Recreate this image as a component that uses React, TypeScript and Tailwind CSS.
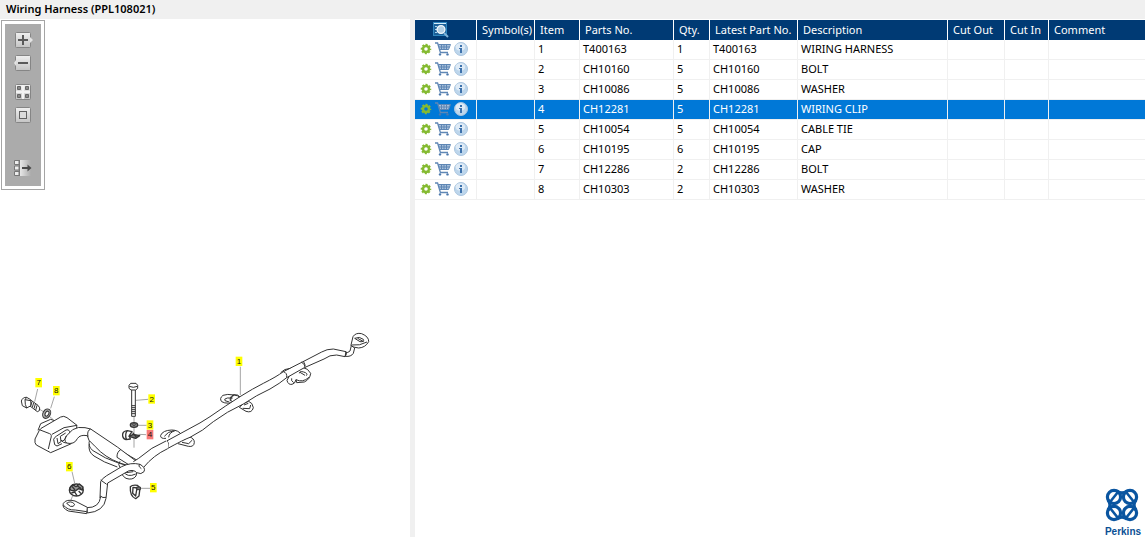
import React from 'react';

type Part = {
  item: number;
  partNo: string;
  qty: number;
  description: string;
};

const parts: Part[] = [
  { item: 1, partNo: 'T400163', qty: 1, description: 'WIRING HARNESS' },
  { item: 2, partNo: 'CH10160', qty: 5, description: 'BOLT' },
  { item: 3, partNo: 'CH10086', qty: 5, description: 'WASHER' },
  { item: 4, partNo: 'CH12281', qty: 5, description: 'WIRING CLIP' },
  { item: 5, partNo: 'CH10054', qty: 5, description: 'CABLE TIE' },
  { item: 6, partNo: 'CH10195', qty: 6, description: 'CAP' },
  { item: 7, partNo: 'CH12286', qty: 2, description: 'BOLT' },
  { item: 8, partNo: 'CH10303', qty: 2, description: 'WASHER' },
];

// Label centres, in drawing units
const callouts = [
  { n: 1, x: 717, y: -11 },
  { n: 2, x: 455, y: 102 },
  { n: 3, x: 450, y: 180 },
  { n: 4, x: 450, y: 209 },
  { n: 5, x: 460, y: 368 },
  { n: 6, x: 208, y: 305 },
  { n: 7, x: 116, y: 53 },
  { n: 8, x: 169, y: 77 },
];

function GearIcon() {
  return (
    <svg width="12" height="12" viewBox="0 0 12 12">
      <circle cx="6" cy="6" r="4.3" fill="none" stroke="#86ba35" strokeWidth="2" strokeDasharray="2 1.377" strokeDashoffset="1" />
      <circle cx="6" cy="6" r="3" fill="none" stroke="#84ba30" strokeWidth="2.4" />
    </svg>
  );
}

function CartIcon() {
  return (
    <svg width="16" height="14" viewBox="0 0 16 14" fill="none">
      <path d="M3.5 2.5H15L13.5 7.5H5Z" fill="#a9c1dc" />
      <path d="M0 1H2.6L5.4 10.5H13" stroke="#5f87b5" strokeWidth="1.3" />
      <path d="M3.3 2.5H15.5L13.5 7.5H4.8M3.8 5H14.5M6.5 2.5V7.5M9 2.5V7.5M11.5 2.5V7.5" stroke="#5f87b5" />
      <circle cx="5" cy="12.4" r="1.2" fill="#4d79ad" />
      <circle cx="12.5" cy="12.4" r="1.2" fill="#4d79ad" />
    </svg>
  );
}

function InfoIcon() {
  return (
    <svg width="14" height="14" viewBox="0 0 14 14">
      <circle cx="7" cy="7" r="6.5" fill="#bdd6ec" stroke="#a9c4de" />
      <ellipse cx="6.4" cy="5" rx="4.8" ry="3.8" fill="#dfebf6" />
      <rect x="6" y="3" width="2" height="2" fill="#3f73ad" />
      <path d="M5 6H8V11H6V7H5Z" fill="#3f73ad" />
    </svg>
  );
}

function SearchListIcon() {
  return (
    <svg width="16" height="16" viewBox="0 0 16 16">
      <rect x="0.5" y="0.5" width="13" height="13" fill="#1a5f98" stroke="#2f86bf" />
      <path d="M1 1.5H13" stroke="#d5ecfa" strokeWidth="1" />
      <path d="M2 4.5H4M2 7.5H4M2 10.5H4" stroke="#a9d5f0" />
      <circle cx="8" cy="7.5" r="3.9" fill="#b4d0e4" stroke="#f0f6fa" strokeWidth="1.4" />
      <path d="M11 11L15 15" stroke="#7fb4da" strokeWidth="2" />
    </svg>
  );
}

function ToolFrame({ notch, children }: { notch?: 'left' | 'right'; children: React.ReactNode }) {
  return (
    <svg width="19" height="16" viewBox="0 0 19 16">
      <defs>
        <linearGradient id="tool" x1="0" y1="0" x2="0" y2="1">
          <stop offset="0" stopColor="#f0f0f0" />
          <stop offset="1" stopColor="#c4c4c4" />
        </linearGradient>
      </defs>
      <rect x="1.5" y="0.5" width="15" height="15" rx="1" fill="url(#tool)" stroke="#858585" />
      {notch === 'right' && <path d="M16 5L19 8L16 11Z" fill="#e4e4e4" />}
      {notch === 'left' && <path d="M2 5L0 8L2 11Z" fill="#e4e4e4" />}
      {children}
    </svg>
  );
}

function Toolbar() {
  return (
    <div className="w-11 border border-[#a5a5a5] bg-white p-[3px] ml-px mt-px">
      <div className="flex h-[162px] flex-col items-center bg-[#ababab] pt-2">
        <button type="button" aria-label="Zoom in" className="h-4">
          <ToolFrame notch="right">
            <path d="M4 8H14M9 3V13" stroke="#5a5a5a" strokeWidth="2" />
          </ToolFrame>
        </button>
        <button type="button" aria-label="Zoom out" className="mt-[7px] h-4">
          <ToolFrame notch="left">
            <path d="M4 8H14" stroke="#5a5a5a" strokeWidth="2" />
          </ToolFrame>
        </button>
        <button type="button" aria-label="Fit to window" className="mt-[13px] h-4">
          <ToolFrame>
            <path d="M9 1V15M2 8H16" stroke="#f2f2f2" strokeWidth="2" />
            <path d="M3.5 2.5H6.5V5.5H3.5ZM11.5 2.5H14.5V5.5H11.5ZM3.5 10.5H6.5V13.5H3.5ZM11.5 10.5H14.5V13.5H11.5Z" fill="#888" stroke="#666" />
          </ToolFrame>
        </button>
        <button type="button" aria-label="Actual size" className="mt-[7px] h-4">
          <ToolFrame>
            <rect x="5.5" y="4.5" width="7" height="7" fill="#dcdcdc" stroke="#626262" />
          </ToolFrame>
        </button>
        <button type="button" aria-label="Hide list" className="mt-[37px] h-4">
          <svg width="19" height="16" viewBox="0 0 19 16">
            <defs>
              <linearGradient id="fade">
                <stop offset="0" stopColor="#e8e8e8" />
                <stop offset="1" stopColor="#ababab" />
              </linearGradient>
            </defs>
            <rect x="6" y="0" width="11" height="16" fill="url(#fade)" />
            <path d="M0.5 0.5H5V4.5H0.5ZM0.5 6H5V10H0.5ZM0.5 11.5H5V15.5H0.5Z" fill="#ededed" stroke="#777" />
            <path d="M5.5 0V16" stroke="#777" />
            <path d="M8 8H15" stroke="#4a4a4a" strokeWidth="2" />
            <path d="M13.5 4.5L17.5 8L13.5 11.5Z" fill="#4a4a4a" />
          </svg>
        </button>
      </div>
    </div>
  );
}

function HarnessDrawing() {
  return (
    <svg width="410" height="205" viewBox="0 -135 1230 615" fill="none" stroke="#333" strokeWidth="3" strokeLinejoin="round" role="img" aria-label="Wiring harness">
      {/* leader lines */}
      <path
        d="M721 5V90M408 106L444 103M412 181H440M416 208L438 209M420 370H450M216 320L224 354M113 72L104 110M163 95L152 130M118 132L130 140M148 154L160 164M402 155V248M218 392L212 408"
        stroke="#777"
        strokeWidth="2"
      />

      {/* bolt 7 and washer 8 */}
      <path d="M92 105L114 121Q122 128 118 137L112 140L90 123" fill="#fff" />
      <path d="M64 108Q68 96 80 97L92 104L93 122L80 129L67 122ZM80 97L75 104L76 118L80 129M75 104L92 107" fill="#fff" />
      <path d="M96 110L92 122M101 113L97 127M106 117L102 131M111 121L107 136" />
      <ellipse cx="140" cy="146" rx="11" ry="15" transform="rotate(30 140 146)" fill="#aaa" />
      <ellipse cx="141" cy="146" rx="5" ry="8" transform="rotate(30 141 146)" fill="#fff" />

      {/* connector */}
      <path d="M114 196L122 176L152 163L164 167" />
      <path d="M105 222L118 196Q121 190 132 185L182 156Q191 151 201 158L231 181L226 205L214 236L152 263L109 240Q103 235 105 222Z" fill="#fff" />
      <path d="M118 194L149 206Q157 208 152 222L145 252M156 208L192 188L231 181" />
      <path d="M161 223Q163 217 170 213L198 195Q206 191 209 200L210 209M161 223L164 239L171 243L186 236M171 219L174 236L183 230L181 214L197 204" />

      {/* cable from the connector */}
      <path d="M270 222Q261 244 279 257Q314 281 358 295L388 303L410 285L290 215Z" fill="#fff" />
      <path d="M183 226Q193 232 199 213L218 194Q234 184 255 188L272 192L352 246L412 291L388 303L360 294Q314 277 286 245L267 226L262 212Q240 208 232 221Q223 240 199 234Q190 234 183 226Z" fill="#fff" />
      <path d="M272 192Q260 197 264 215M199 213Q190 225 200 234M352 306Q310 292 282 273Q263 260 268 237M363 253Q350 261 351 277L410 314M360 289Q352 298 361 309" />

      {/* small eyelet under the junction */}
      <path d="M366 309Q359 329 378 340Q398 347 408 333L412 315M369 319Q382 339 407 327M378 323L400 320" fill="#fff" />

      {/* main loom */}
      <g transform="translate(570 -135)">
        <path d="M-72 355Q-90 357 -88 346Q-82 331 -55 330Q-34 330 -25 345M-77 349Q-67 335 -49 332M-64 352Q-63 338 -45 332" />
        <path d="M-36 371L-5 379Q12 382 13 367Q13 354 -4 350L-18 359M-24 367L-4 371L7 360" />
        <path d="M144 243Q112 255 95 245Q87 235 99 226Q111 221 132 225Q145 226 151 233M118 246L105 242Q100 237 112 234L128 234M124 245Q119 232 132 226" fill="#fff" />
        <path d="M148 262L168 274Q186 280 190 263Q188 248 176 244L160 251ZM158 265L179 266L182 255M162 255L175 250" fill="#fff" />
        <path d="M297 170L291 181Q294 195 306 193Q315 192 318 179L320 188L343 186Q360 178 362 160Q355 145 337 142L305 154Z" fill="#fff" />
        <path d="M305 175Q302 182 311 188M328 160Q328 152 341 156Q355 160 349 167M330 157L345 166M318 179Q338 189 357 172" />
        <path d="M483 75L489 50Q497 37 515 41Q537 50 536 65Q526 83 506 84L490 81Q480 78 483 75Z" fill="#fff" />
        <path d="M494 55Q509 48 520 58Q524 66 510 65ZM503 55L521 65M485 75Q509 78 531 66" />
        <path d="M484 77L480 93Q474 99 466 98L466 109Q483 111 490 100L494 84Z" fill="#fff" />
        <path
          d="M-68 386Q-19 359 0 352Q40 332 70 305Q110 275 160 252Q200 225 240 207Q270 190 290 173L343 143L402 117Q419 104 440 105L465 110L468 95L430 87Q410 87 395 96L345 122L280 155Q260 170 220 190Q190 205 150 230Q110 255 60 290Q30 310 0 325L-70 363"
          fill="#fff"
        />
        <path d="M468 95Q472 102 465 110M334 126Q347 134 345 143M340 123L346 137M280 155Q292 158 290 173M272 158Q282 146 301 145M-70 363Q-60 370 -68 386M121 243Q118 229 132 224Q145 223 150 231" />
      </g>
      <path d="M400 290L416 280Q454 246 498 228Q510 234 503 251Q460 271 431 307L408 308Z" fill="#fff" stroke="none" />
      <path d="M400 290L416 280Q454 246 498 228M503 251Q460 271 431 307" />

      {/* lower branch */}
      <path d="M300 398L302 350Q304 342 320 332L365 305Q392 291 420 298Q438 308 432 320Q424 330 410 323Q402 313 385 318L323 354L318 400Q312 440 262 444L260 428Q298 429 302 395Z" fill="#fff" />
      <path d="M302 345L320 358M301 393Q308 400 318 397M420 298Q412 302 424 311" />
      <path d="M262 427L225 408Q199 401 190 415Q185 429 205 438L260 446ZM200 415Q213 405 224 418Q222 427 211 424ZM190 420Q202 436 226 435L260 440" fill="#fff" />

      {/* bolt 2, washer 3, clip 4 */}
      <path d="M387 61L392 55H408L413 61V70L407 75H393L387 70ZM388 64Q400 70 412 64M395 75V154H406V75" fill="#fff" />
      <path d="M395 122H406M395 128H406M395 134H406M395 140H406M395 146H406" />
      <ellipse cx="402" cy="180" rx="11" ry="7" fill="#888" strokeWidth="4" />
      <ellipse cx="402" cy="179" rx="5" ry="2" fill="#fff" />
      <path d="M368 207Q370 198 382 197L396 200L388 212L391 222L378 224Q366 220 368 207ZM382 197Q374 206 379 223" fill="#fff" strokeWidth="4" />
      <path d="M387 214L400 208L419 212L407 220ZM398 203L410 218" fill="#777" strokeWidth="4" />

      {/* tie 5 and cap 6 */}
      <path d="M391 365Q397 359 412 361L420 369L417 393L407 401Q389 394 391 365ZM399 367L398 385L407 393L411 369Z" fill="#fff" strokeWidth="4" />
      <path d="M410 366H421V374H411Z" fill="#777" />
      <ellipse cx="229" cy="375" rx="21" ry="18" fill="#fff" strokeWidth="4" />
      <path d="M209 370L218 359L228 365L238 357L249 366L247 375L236 371L226 378L213 376Z" fill="#999" strokeWidth="4" />
      <path d="M216 364L225 375M232 363L244 371M214 384L224 381L231 392M236 378L243 386" strokeWidth="4" />

      {callouts.map((c) => (
        <g key={c.n} stroke="none">
          <rect x={c.x - 10} y={c.y - 14} width="20" height="28" fill={c.n === 4 ? '#f77878' : '#ffff00'} />
          <text x={c.x} y={c.y + 8} textAnchor="middle" fontSize="24" fill="#111" fontFamily="'Liberation Sans', sans-serif">
            {c.n}
          </text>
        </g>
      ))}
    </svg>
  );
}

function PerkinsLogo() {
  return (
    <svg width="40" height="50" viewBox="0 0 40 50" role="img" aria-label="Perkins">
      <g fill="none" stroke="#0a55a0" strokeWidth="3.2">
        <circle cx="11" cy="10" r="6.6" />
        <circle cx="27" cy="10" r="6.6" />
        <circle cx="11" cy="26" r="6.6" />
        <circle cx="27" cy="26" r="6.6" />
        <path d="M7 15L15 5M31 15L23 5M7 21L15 31M31 21L23 31" strokeWidth="2.6" />
        <path d="M14 4Q19 8 24 4M14 32Q19 28 24 32M5 13Q9 18 5 23M33 13Q29 18 33 23" />
      </g>
      <text x="20" y="48" textAnchor="middle" fontSize="10" fontWeight="bold" fill="#0a4f94" fontFamily="'Liberation Sans', sans-serif">
        Perkins
      </text>
    </svg>
  );
}

function PartsTable() {
  const th = 'h-5 border-r border-white p-0 pl-[5px] text-left font-normal last:border-r-0';
  const td = 'h-5 border-r border-b border-[#f0f0f0] p-0 pb-0.5 pl-[3px] last:border-r-0';

  return (
    <table className="w-full table-fixed border-separate border-spacing-0 whitespace-nowrap text-[11px] leading-4">
      <colgroup>
        <col className="w-[62px]" />
        <col className="w-[58px]" />
        <col className="w-[45px]" />
        <col className="w-[94px]" />
        <col className="w-9" />
        <col className="w-[88px]" />
        <col className="w-[150px]" />
        <col className="w-[57px]" />
        <col className="w-11" />
        <col />
      </colgroup>
      <thead>
        <tr className="bg-[#003a74] text-white">
          <th className="h-5 border-r border-white p-0 pl-[18px]" aria-label="Actions">
            <SearchListIcon />
          </th>
          <th className={th}>Symbol(s)</th>
          <th className={th}>Item</th>
          <th className={th}>Parts No.</th>
          <th className={th}>Qty.</th>
          <th className={th}>Latest Part No.</th>
          <th className={th}>Description</th>
          <th className={th}>Cut Out</th>
          <th className={th}>Cut In</th>
          <th className={th}>Comment</th>
        </tr>
      </thead>
      <tbody>
        {parts.map((p) => (
          <tr key={p.item} className={p.item === 4 ? 'bg-[#0078d7] text-white' : 'bg-white text-black'}>
            <td className="h-5 border-r border-b border-[#f0f0f0] p-0 pb-0.5">
              <div className="flex items-center gap-[3px] pl-[5px]">
                <button type="button" aria-label={`Options for item ${p.item}`}>
                  <GearIcon />
                </button>
                <button type="button" aria-label={`Add item ${p.item} to cart`}>
                  <CartIcon />
                </button>
                <button type="button" aria-label={`Details of item ${p.item}`}>
                  <InfoIcon />
                </button>
              </div>
            </td>
            <td className={td}></td>
            <td className={td}>{p.item}</td>
            <td className={td}>{p.partNo}</td>
            <td className={td}>{p.qty}</td>
            <td className={td}>{p.partNo}</td>
            <td className={td}>{p.description}</td>
            <td className={td}></td>
            <td className={td}></td>
            <td className={td}></td>
          </tr>
        ))}
      </tbody>
    </table>
  );
}

export default function App() {
  return (
    <div className="flex min-h-screen flex-col bg-white font-['Noto_Sans',sans-serif] text-black">
      <h1 className="bg-[#f0f0f0] pb-px pl-1.5 text-[11px] font-semibold leading-[18px]">Wiring Harness (PPL108021)</h1>
      <div className="flex flex-1">
        <section className="flex w-[410px] shrink-0 flex-col justify-between pb-3">
          <Toolbar />
          <HarnessDrawing />
        </section>
        <div className="w-[5px] shrink-0 bg-[#f0f0f0]" />
        <main className="flex min-w-0 flex-1 flex-col justify-between pt-px">
          <PartsTable />
          <div className="flex justify-end pr-0.5">
            <PerkinsLogo />
          </div>
        </main>
      </div>
    </div>
  );
}
